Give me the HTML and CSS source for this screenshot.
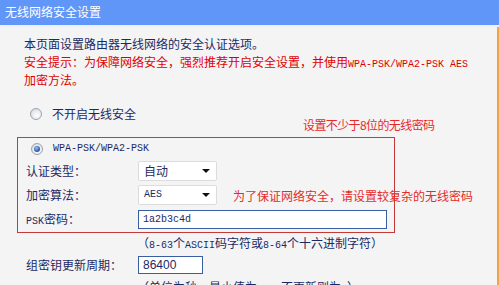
FILE: index.html
```html
<!DOCTYPE html>
<html lang="zh-CN">
<head>
  <meta charset="UTF-8">
  <meta name="viewport" content="width=device-width, initial-scale=1.0">
  <title>无线网络安全设置</title>
  <link rel="stylesheet" href="styles.css">
</head>
<body>

  <div class="title-bar">无线网络安全设置</div>

  <div class="page">
    <p class="intro">本页面设置路由器无线网络的安全认证选项。</p>
    <p class="warn">安全提示：为保障网络安全，强烈推荐开启安全设置，并使用<span class="en">WPA-PSK/WPA2-PSK AES</span><br>加密方法。</p>

    <div class="radio-row off">
      <span class="radio"></span>
      <span>不开启无线安全</span>
    </div>

    <div class="psk-box">
      <div class="note note-top">设置不少于8位的无线密码</div>
      <div class="note note-mid">为了保证网络安全，请设置较复杂的无线密码</div>

      <div class="radio-row">
        <span class="radio checked"></span>
        <span class="en">WPA-PSK/WPA2-PSK</span>
      </div>
      <div class="row">
        <span class="label">认证类型：</span>
        <div class="select"><span>自动</span><i class="arrow"></i></div>
      </div>
      <div class="row">
        <span class="label">加密算法：</span>
        <div class="select"><span class="en">AES</span><i class="arrow"></i></div>
      </div>
      <div class="row">
        <span class="label"><span class="en">PSK</span>密码：</span>
        <input class="field field-wide en" value="1a2b3c4d">
      </div>
    </div>

    <p class="hint">（<span class="en">8-63</span>个<span class="en">ASCII</span>码字符或<span class="en">8-64</span>个十六进制字符）</p>

    <div class="row outer">
      <span class="label">组密钥更新周期：</span>
      <input class="field field-short num" value="86400">
    </div>
    <p class="hint">（单位为秒，最小值为<span class="en">30</span>，不更新则为<span class="en">0</span>）</p>
  </div>

</body>
</html>
```

FILE: styles.css
```css
body {
  margin: 0;
  background: #f4f4f4;
  font-family: "Noto Sans CJK SC", sans-serif;
  font-size: 12px;
  line-height: 18px;
  color: #1c2a63;
  overflow: hidden;
}
p {
  margin: 0;
}
.en {
  font-family: "Liberation Mono", monospace;
  font-size: 10px;
  line-height: 1;
}
.title-bar {
  height: 25px;
  line-height: 24px;
  padding-left: 5px;
  background: #6096f7;
  color: #fff;
  border-bottom: 2px solid #eef2f8;
}
.page {
  padding: 8px 0 0 24px;
  border-right: 2px solid #f0a444;
  min-height: 260px;
}
.warn {
  color: #e00000;
}
.radio-row {
  display: flex;
  align-items: center;
  height: 20px;
  padding-left: 6px;
}
.radio-row.off {
  margin-top: 16px;
  margin-bottom: 14px;
  height: 18px;
}
.radio {
  width: 10px;
  height: 10px;
  border: 1px solid #9ba3ad;
  border-radius: 50%;
  background: radial-gradient(circle at 60% 65%, #ffffff 0, #e6e8ec 55%, #c9ccd2 100%);
  margin-right: 10px;
  position: relative;
}
.radio.checked::after {
  content: "";
  position: absolute;
  left: 2px;
  top: 2px;
  width: 6px;
  height: 6px;
  border-radius: 50%;
  background: radial-gradient(circle at 40% 35%, #9fc0f0 0, #2f5fb8 60%, #1d3f86 100%);
}
.psk-box {
  position: relative;
  margin-left: -7px;
  width: 368px;
  padding: 1px 0 1px 8px;
  border: 1px solid #c43a3a;
  border-top-color: #b84040;
}
.psk-box .radio-row {
  padding-left: 5px;
}
.note {
  position: absolute;
  color: #e52b2b;
  white-space: nowrap;
}
.note-top {
  left: 285px;
  top: -22px;
  letter-spacing: -0.6px;
}
.note-mid {
  left: 215px;
  top: 49px;
}
.row {
  display: flex;
  align-items: center;
  height: 24px;
}
.row.outer {
  margin-top: 1px;
  padding-left: 2px;
}
.label {
  width: 112px;
  flex: none;
}
.select {
  display: flex;
  align-items: center;
  justify-content: space-between;
  box-sizing: border-box;
  width: 79px;
  height: 20px;
  padding: 0 6px 0 5px;
  background: #fff;
  border: 1px solid #dcdcdc;
  border-radius: 2px;
}
.arrow {
  width: 0;
  height: 0;
  border-left: 4px solid transparent;
  border-right: 4px solid transparent;
  border-top: 4px solid #111;
}
.field {
  box-sizing: border-box;
  height: 19px;
  margin: 0;
  padding: 0 4px;
  background: #fff;
  border: 1px solid #3a5ea4;
  color: #1c2a63;
  outline: none;
}
.field-wide {
  width: 249px;
}
.field-short {
  width: 65px;
  height: 18px;
}
.num {
  font-family: "Liberation Sans", Arial, sans-serif;
  font-size: 12px;
}
.hint {
  padding-left: 113px;
  margin-top: 1px;
}
```
